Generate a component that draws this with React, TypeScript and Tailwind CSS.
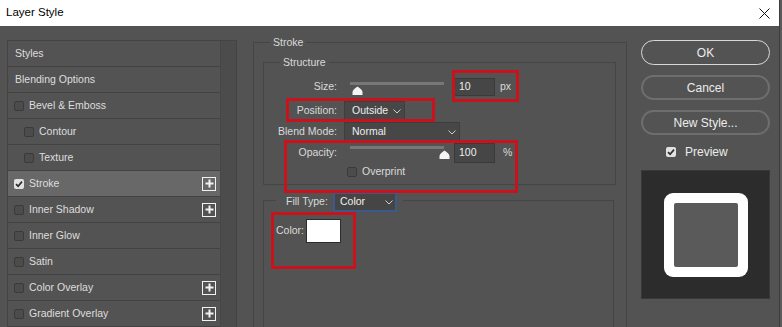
import React from 'react';

const font = "font-['Liberation_Sans',Arial,sans-serif]";

const Box = ({ on, sm }: { on?: boolean; sm?: boolean }) =>
  on ? (
    <span className="w-[10px] h-[10px] rounded-[2px] bg-[#e2e2e2] flex items-center justify-center shrink-0">
      <svg width="8" height="8" viewBox="0 0 8 8">
        <path d="M1 4.2 3.1 6.2 7 1.6" fill="none" stroke="#2e2e2e" strokeWidth="1.7" />
      </svg>
    </span>
  ) : (
    <span className={`${sm ? 'w-[10px] h-[10px]' : 'w-[10px] h-[10px]'} rounded-[2px] border border-[#3a3a3a] bg-[#4c4c4c] shrink-0`} />
  );

const Plus = () => (
  <span className="w-[14px] h-[14px] border-[1.5px] border-[#f2f2f2] flex items-center justify-center">
    <svg width="9" height="9" viewBox="0 0 9 9">
      <path d="M4.5 0.5v8M0.5 4.5h8" stroke="#f2f2f2" strokeWidth="2" />
    </svg>
  </span>
);

const Chevron = () => (
  <svg width="8" height="5" viewBox="0 0 8 5" className="shrink-0">
    <path d="M0.5 0.5 4 4 7.5 0.5" fill="none" stroke="#cfcfcf" strokeWidth="1" />
  </svg>
);

const Thumb = () => (
  <svg width="11" height="9" viewBox="0 0 11 9">
    <path d="M5.5 0.5C7.5 2 10.5 4 10.5 6V9H0.5V6C0.5 4 3.5 2 5.5 0.5Z" fill="#f4f4f4" />
  </svg>
);

type Row = { label: string; cb?: boolean | null; sub?: boolean; plus?: boolean; active?: boolean };

const rows: Row[] = [
  { label: 'Styles', cb: null },
  { label: 'Blending Options', cb: null },
  { label: 'Bevel & Emboss', cb: false },
  { label: 'Contour', cb: false, sub: true },
  { label: 'Texture', cb: false, sub: true },
  { label: 'Stroke', cb: true, plus: true, active: true },
  { label: 'Inner Shadow', cb: false, plus: true },
  { label: 'Inner Glow', cb: false },
  { label: 'Satin', cb: false },
  { label: 'Color Overlay', cb: false, plus: true },
  { label: 'Gradient Overlay', cb: false, plus: true },
];

const Legend = ({ children, className = '' }: { children: React.ReactNode; className?: string }) => (
  <div className={`bg-[#535353] w-fit h-[15px] leading-[15px] px-[3px] ${className}`}>{children}</div>
);

export default function App() {
  return (
    <div className={`w-[782px] h-[327px] overflow-hidden flex ${font} text-[10.5px] text-[#dadada]`}>
      <div className="w-[779px] h-full flex flex-col bg-[#535353]">
        {/* title bar */}
        <div className="h-[26px] bg-white flex items-center justify-between pl-[6px] pr-[9px] shrink-0">
          <span className="text-[11.5px] text-black">Layer Style</span>
          <svg width="11" height="11" viewBox="0 0 11 11">
            <path d="M0.5 0.5 10.5 10.5M10.5 0.5 0.5 10.5" stroke="#111" strokeWidth="1" />
          </svg>
        </div>

        <div className="relative flex-1 flex pl-[7px] pt-[14px]">
          {/* styles list */}
          <div className="w-[230px] h-[300px] border border-[#444] flex shrink-0">
            <div className="w-[212px] flex flex-col">
              {rows.map((r) => (
                <div
                  key={r.label}
                  className={`h-[26px] shrink-0 border-b border-[#424242] flex items-center pr-[4px] ${r.active ? 'bg-[#686868]' : ''} ${r.cb === null ? 'pl-[7px]' : r.sub ? 'pl-[16px]' : 'pl-[6px]'}`}
                >
                  {r.cb !== null && <Box on={r.cb} />}
                  <span className={`${r.cb !== null ? 'ml-[5px]' : ''} text-[#dedede]`}>{r.label}</span>
                  <span className="flex-1" />
                  {r.plus && <Plus />}
                </div>
              ))}
            </div>
            <div className="w-[16px] bg-[#4c4c4c] border-l border-[#474747]" />
          </div>

          {/* stroke settings */}
          <div className="ml-[16px] mt-[2px] w-[374px] h-[320px] border border-[#454545] shrink-0">
            <Legend className="-mt-[8px] ml-[16px]">Stroke</Legend>

            <div className="ml-[9px] mt-[12px] w-[353px] border border-[#454545] pb-[6px]">
              <Legend className="-mt-[8px] ml-[16px]">Structure</Legend>

              <div className="mt-[7px] h-[20px] flex items-center">
                <span className="w-[73px] text-right">Size:</span>
                <div className="relative ml-[7px] w-[110px] h-full">
                  <div className="absolute left-[6px] top-[5px] w-[94px] h-[3px] bg-[#777]" />
                  <div className="absolute left-[8px] top-[9px] leading-none">
                    <Thumb />
                  </div>
                </div>
                <div className="w-[41px] h-[18px] bg-[#464646] border border-[#3a3a3a] flex items-center pl-[4px] text-[#eee]">10</div>
                <span className="ml-[5px]">px</span>
              </div>

              <div className="mt-[4px] h-[20px] flex items-center">
                <span className="w-[73px] text-right">Position:</span>
                <div className="ml-[7px] w-[61px] h-[20px] bg-[#474747] border border-[#3e3e3e] flex items-center pl-[7px] pr-[3px] text-[#eee]">
                  <span className="flex-1">Outside</span>
                  <Chevron />
                </div>
              </div>

              <div className="mt-[1px] h-[20px] flex items-center">
                <span className="w-[73px] text-right">Blend Mode:</span>
                <div className="ml-[7px] w-[116px] h-[20px] bg-[#474747] border border-[#3e3e3e] flex items-center pl-[7px] pr-[3px] text-[#eee]">
                  <span className="flex-1">Normal</span>
                  <Chevron />
                </div>
              </div>

              <div className="mt-[1px] h-[20px] flex items-center">
                <span className="w-[73px] text-right">Opacity:</span>
                <div className="relative ml-[7px] w-[110px] h-full">
                  <div className="absolute left-[6px] top-[3px] w-[94px] h-[3px] bg-[#777]" />
                  <div className="absolute left-[95px] top-[7px] leading-none">
                    <Thumb />
                  </div>
                </div>
                <div className="w-[41px] h-[20px] bg-[#464646] border border-[#3a3a3a] flex items-center pl-[4px] text-[#eee]">100</div>
                <span className="ml-[8px]">%</span>
              </div>

              <div className="mt-[3px] h-[12px] flex items-center pl-[83px]">
                <Box />
                <span className="ml-[5px]">Overprint</span>
              </div>
            </div>

            <div className="ml-[9px] mt-[15px] w-[351px] h-[140px] border border-[#454545]">
              <div className="-mt-[9px] ml-[12px] w-fit h-[20px] bg-[#535353] flex items-center pl-[10px] pr-[6px]">
                <span className="w-[47px]">Fill Type:</span>
                <div className="w-[64px] h-[20px] bg-[#454545] border-2 border-[#3b5a8a] flex items-center pl-[5px] pr-[2px] text-[#eee]">
                  <span className="flex-1">Color</span>
                  <Chevron />
                </div>
              </div>
              <div className="mt-[7px] pl-[12px] flex items-center">
                <span className="w-[30px]">Color:</span>
                <div className="w-[35px] h-[24px] bg-white border border-[#2c2c2c]" />
              </div>
            </div>
          </div>

          {/* buttons + preview */}
          <div className={`ml-[14px] w-[129px] flex flex-col text-[12px] text-[#ececec] shrink-0`}>
            <button className="h-[25px] rounded-full border-[1.5px] border-[#d8d8d8] flex items-center justify-center">OK</button>
            <button className="mt-[10px] h-[25px] rounded-full border-2 border-[#6e6e6e] flex items-center justify-center">Cancel</button>
            <button className="mt-[10px] h-[25px] rounded-full border-2 border-[#6e6e6e] flex items-center justify-center">New Style...</button>
            <div className="mt-[12px] h-[10px] flex items-center pl-[25px]">
              <Box on />
              <span className="ml-[9px]">Preview</span>
            </div>
            <div className="mt-[13px] w-[129px] h-[129px] bg-[#2c2c2c] border border-[#383838] flex items-center justify-center">
              <div className="w-[84px] h-[84px] rounded-[9px] bg-white flex items-center justify-center">
                <div className="w-[64px] h-[64px] rounded-[2px] bg-[#5a5a5a]" />
              </div>
            </div>
          </div>

          {/* red annotation boxes */}
          <div className="absolute left-[452px] top-[44px] w-[67px] h-[32px] border-[3px] border-[#c8121c]" />
          <div className="absolute left-[286px] top-[72px] w-[149px] h-[24px] border-[3px] border-[#c8121c]" />
          <div className="absolute left-[284px] top-[114px] w-[234px] h-[53px] border-[3px] border-[#c8121c]" />
          <div className="absolute left-[271px] top-[186px] w-[85px] h-[57px] border-[3px] border-[#c8121c]" />
        </div>
      </div>
      <div className="w-[3px] h-full bg-[#5b5b5b] border-l border-[#3c3c3c]" />
    </div>
  );
}
